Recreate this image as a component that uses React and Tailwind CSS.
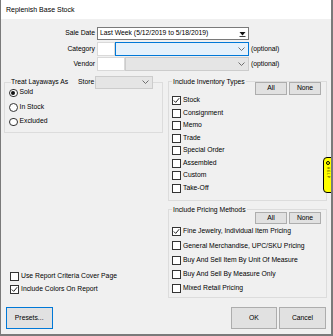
import React from "react"

function Chevron(){
return (
<svg width="7" height="4" viewBox="0 0 7 4" className="shrink-0">
<path d="M0.5 0.5 L3.5 3.5 L6.5 0.5" fill="none" stroke="#606060" strokeWidth="0.9" />
</svg>
)
}

function Check({checked}){
return (
<span className="w-[9px] h-[9px] border border-[#333333] bg-white flex items-center justify-center shrink-0">
{checked && (
<svg width="7" height="7" viewBox="0 0 7 7">
<path d="M0.8 3.5 L2.7 5.4 L6.2 1.2" fill="none" stroke="#222222" strokeWidth="1" />
</svg>
)}
</span>
)
}

function Radio({checked}){
return (
<span className="w-[8.5px] h-[8.5px] rounded-full border border-[#333333] bg-white flex items-center justify-center shrink-0">
{checked && <span className="w-[4px] h-[4px] rounded-full bg-[#111111]" />}
</span>
)
}

function Btn({children, className=""}){
return (
<button className={"bg-[#e1e1e1] border border-[#adadad] flex items-center justify-center " + className}>
{children}
</button>
)
}

const inventoryTypes = [
["Stock", true],
["Consignment", false],
["Memo", false],
["Trade", false],
["Special Order", false],
["Assembled", false],
["Custom", false],
["Take-Off", false],
]

const pricingMethods = [
["Fine Jewelry, Individual Item Pricing", true],
["General Merchandise, UPC/SKU Pricing", false],
["Buy And Sell Item By Unit Of Measure", false],
["Buy And Sell By Measure Only", false],
["Mixed Retail Pricing", false],
]

export default function App(){
return (
<div className="w-[333px] h-[336px] flex flex-col bg-[#f0f0f0] border-l border-r-2 border-b-2 border-[#7a7a7a] text-[6.8px] leading-none text-black overflow-hidden [font-family:'Liberation_Sans',Arial,sans-serif]">

{/* TITLE */}
<div className="h-[19px] bg-white flex items-center pl-[5px] text-[7px] shrink-0">
Replenish Base Stock
</div>

<div className="flex-1 flex flex-col relative">

{/* TOP FORM */}
<div className="pt-[8px]">
<div className="flex items-center h-[13px]">
<span className="w-[96px] text-right pr-[2px]">Sale Date</span>
<div className="w-[152px] h-[13px] bg-white border border-[#7a7a7a] flex items-center justify-between pl-[2px] pr-[2px]">
<span>Last Week (5/12/2019 to 5/18/2019)</span>
<svg width="7" height="7" viewBox="0 0 7 7">
<path d="M0.5 2 L6.5 2 L3.5 5.5 Z" fill="#111111" />
<rect x="0.5" y="6" width="6" height="0.8" fill="#111111" />
</svg>
</div>
</div>

<div className="flex items-center h-[14px] mt-[2px]">
<span className="w-[96px] text-right pr-[2px]">Category</span>
<div className="w-[18px] h-[14px] bg-white border border-[#d9d9d9]" />
<div className="w-[134px] h-[14px] bg-[#e5f1fb] border border-[#0078d7] flex items-center justify-end pr-[3px]">
<Chevron />
</div>
<span className="ml-[2px]">(optional)</span>
</div>

<div className="flex items-center h-[14px] mt-[1px]">
<span className="w-[96px] text-right pr-[2px]">Vendor</span>
<div className="w-[28px] h-[14px] bg-white border border-[#d9d9d9]" />
<div className="w-[124px] h-[14px] bg-[#e5e5e5] border border-[#cccccc] flex items-center justify-end pr-[3px]">
<Chevron />
</div>
<span className="ml-[2px]">(optional)</span>
</div>
</div>

{/* MAIN */}
<div className="flex items-start gap-[5px] pl-[3px] mt-[4.5px]">

{/* LEFT */}
<div className="w-[159px] flex flex-col">
<fieldset className="h-[57px] border border-[#dcdcdc]">
<legend className="ml-[6px] h-[13px] flex items-center">
<span className="w-[67px]">Treat Layaways As</span>
<span className="w-[17px]">Store</span>
<div className="w-[58px] h-[13px] bg-[#e5e5e5] border border-[#cccccc] flex items-center justify-end pr-[3px]">
<Chevron />
</div>
</legend>
<div className="-mt-[3px] pl-[4px]">
{[["Sold", true], ["In Stock", false], ["Excluded", false]].map(([label, on]) => (
<div key={label} className="h-[14.5px] flex items-center">
<Radio checked={on} />
<span className="ml-[2px]">{label}</span>
</div>
))}
</div>
</fieldset>

<div className="mt-[138px] pl-[6px]">
<div className="h-[12.6px] flex items-center">
<Check checked={false} />
<span className="ml-[2px]">Use Report Criteria Cover Page</span>
</div>
<div className="h-[12.6px] flex items-center">
<Check checked={true} />
<span className="ml-[2px]">Include Colors On Report</span>
</div>
</div>
</div>

{/* RIGHT */}
<div className="w-[159px] flex flex-col mt-[1px]">
<fieldset className="border border-[#dcdcdc] pb-[5.5px]">
<legend className="ml-[3px] px-[1px] h-[9px] leading-[9px]">Include Inventory Types</legend>
<div className="-mt-[3.5px] flex justify-end gap-[2px] pr-[5px]">
<Btn className="w-[32px] h-[12.5px]">All</Btn>
<Btn className="w-[32px] h-[12.5px]">None</Btn>
</div>
<div className="pl-[3px]">
{inventoryTypes.map(([label, on]) => (
<div key={label} className="h-[12.5px] flex items-center">
<Check checked={on} />
<span className="ml-[2px]">{label}</span>
</div>
))}
</div>
</fieldset>

<fieldset className="border border-[#dcdcdc] mt-[3.5px] pb-[1px]">
<legend className="ml-[3px] px-[1px] h-[9px] leading-[9px]">Include Pricing Methods</legend>
<div className="-mt-[1.5px] flex justify-end gap-[2px] pr-[5px]">
<Btn className="w-[32px] h-[12px]">All</Btn>
<Btn className="w-[32px] h-[12px]">None</Btn>
</div>
<div className="pl-[3px] mt-[0.5px]">
{pricingMethods.map(([label, on]) => (
<div key={label} className="h-[14.3px] flex items-center">
<Check checked={on} />
<span className="ml-[2px]">{label}</span>
</div>
))}
</div>
</fieldset>
</div>
</div>

{/* BOTTOM BUTTONS */}
<div className="mt-auto flex items-end justify-between pl-[4.7px] pr-[5px] pb-[5px]">
<button className="w-[47px] h-[22px] bg-[#e1e1e1] border-[1.5px] border-[#0078d7] flex items-center justify-center">
Presets...
</button>
<div className="flex gap-[2px]">
<Btn className="w-[46px] h-[22px]">OK</Btn>
<Btn className="w-[47px] h-[22px]">Cancel</Btn>
</div>
</div>

{/* HELP TAB */}
<div className="absolute left-[322px] top-[138px] w-[9px] h-[36px] bg-[#ffff00] border border-black rounded-l-[4px] flex flex-col items-center pt-[3px]">
<span className="w-[4px] h-[4px] rounded-full border border-black" />
<span className="mt-[2px] text-[3px] [writing-mode:vertical-rl] tracking-[1px]">HELP</span>
</div>

</div>
</div>
)
}
